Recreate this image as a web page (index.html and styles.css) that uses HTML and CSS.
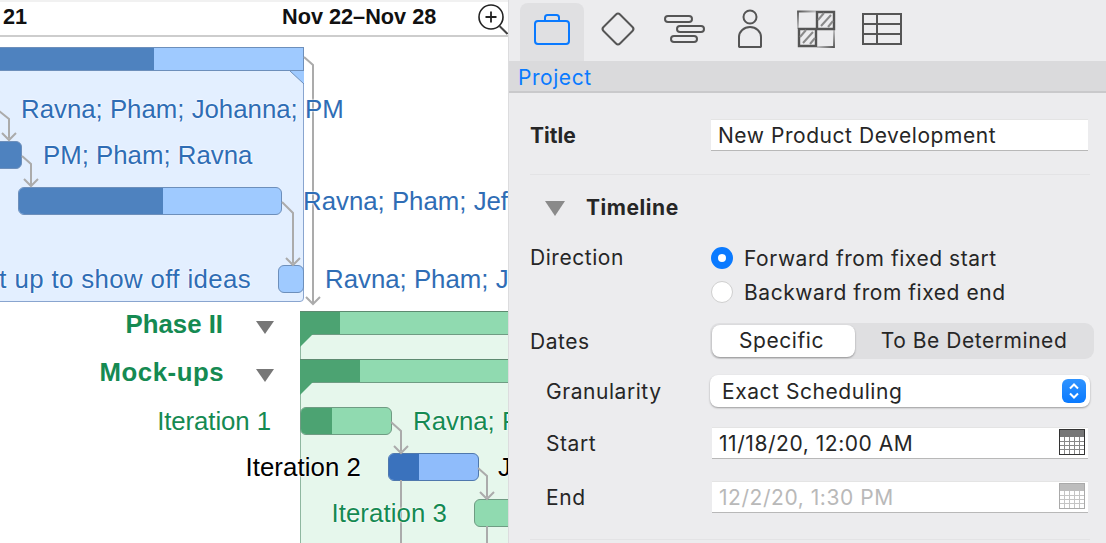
FILE: index.html
```html
<!DOCTYPE html>
<html lang="en">
<head>
<meta charset="utf-8">
<title>New Product Development</title>
<link rel="stylesheet" href="styles.css">
</head>
<body>
<div class="app">
  <section class="gantt">
    <header class="gantt-head">
      <span class="week week-a">21</span>
      <span class="week week-b">Nov 22–Nov 28</span>
      <svg class="zoom-icon" width="30" height="34" viewBox="0 0 30 34"><circle cx="13" cy="16" r="12" fill="none" stroke="#222" stroke-width="1.6"/><path d="M7.500 16h11M13 10.500v11" stroke="#222" stroke-width="1.800" fill="none"/><path d="M21.500 25l8 8" stroke="#444" stroke-width="2" fill="none"/></svg>
    </header>
    <div class="canvas">
      <div class="group group-blue"></div>
      <div class="band band-blue"><i class="done done-blue-a"></i></div>
      <svg class="notch notch-blue" width="14" height="13" viewBox="0 0 14 13"><path d="M0 0H14V13Z" fill="#9fcaff"/><path d="M0 0L14 13" stroke="#6d8fbb" fill="none"/></svg>
      <div class="group group-green"></div>
      <div class="band band-green band-g1"><i class="done done-green-a"></i></div>
      <div class="band band-green band-g2"><i class="done done-green-b"></i></div>
      <svg class="notch notch-g1" width="14" height="14" viewBox="0 0 14 14"><path d="M0 0H14L0 14Z" fill="#4ca372"/></svg>
      <svg class="notch notch-g2" width="14" height="14" viewBox="0 0 14 14"><path d="M0 0H14L0 14Z" fill="#4ca372"/></svg>
      <div class="task task-b1"></div>
      <div class="task task-b2"><i class="done done-b2"></i></div>
      <div class="task task-b3"></div>
      <div class="task task-g1"><i class="done done-g1"></i></div>
      <div class="task task-b4"><i class="done done-b4"></i></div>
      <div class="task task-g3"></div>
      <svg class="links" width="508" height="506" viewBox="0 37 508 506">
        <g fill="none" stroke="#ababab" stroke-width="2">
          <path d="M304 57l9 8V303"/><path d="M306 297l7 7 7-7"/>
          <path d="M-1 111l10 8V138"/><path d="M2 133l7 7 7-7"/>
          <path d="M22 156l9 8V185"/><path d="M24 179l7 7 7-7"/>
          <path d="M282 202l11 11V263"/><path d="M286 258l7 7 7-7"/>
          <path d="M391 422l10 9V451"/><path d="M394 446l7 7 7-7"/>
          <path d="M478 468l9 8V497"/><path d="M480 492l7 7 7-7"/>
          <path d="M401 480V543M487 526V543"/>
        </g>
      </svg>
      <span class="lbl blue l1">Ravna; Pham; Johanna; PM</span>
      <span class="lbl blue l2">PM; Pham; Ravna</span>
      <span class="lbl blue l3">Ravna; Pham; Jef</span>
      <span class="lbl blue l4">t up to show off ideas</span>
      <span class="lbl blue l5">Ravna; Pham; J</span>
      <span class="lbl green strong l6">Phase II</span>
      <span class="tri tri1"></span>
      <span class="lbl green strong l7">Mock-ups</span>
      <span class="tri tri2"></span>
      <span class="lbl green l8">Iteration 1</span>
      <span class="lbl green l9">Ravna; P</span>
      <span class="lbl black l10">Iteration 2</span>
      <span class="lbl black l11">J</span>
      <span class="lbl green l12">Iteration 3</span>
    </div>
  </section>

  <aside class="inspector">
    <nav class="tabs">
      <div class="tab tab-on">
        <svg width="64" height="58" viewBox="0 0 64 58" fill="none" stroke="#0a7aff" stroke-width="2"><rect x="15" y="18" width="34" height="23" rx="3"/><path d="M25 18v-3.500a2.500 2.500 0 0 1 2.500-2.500h9a2.500 2.500 0 0 1 2.500 2.500V18"/></svg>
      </div>
      <div class="tab">
        <svg width="64" height="58" viewBox="0 0 64 58" fill="none" stroke="#555" stroke-width="2"><path d="M30 11.500q2-2 4 0l12.500 12.500q2 2 0 4L34 40.500q-2 2-4 0L17.500 28q-2-2 0-4Z"/></svg>
      </div>
      <div class="tab">
        <svg width="64" height="58" viewBox="0 0 64 58" fill="none" stroke="#555" stroke-width="2"><rect x="13" y="13" width="27" height="6" rx="3"/><rect x="25" y="23" width="27" height="6" rx="3"/><rect x="19" y="33" width="26" height="6" rx="3"/></svg>
      </div>
      <div class="tab">
        <svg width="64" height="58" viewBox="0 0 64 58" fill="none" stroke="#555" stroke-width="2"><circle cx="32" cy="14" r="6.500"/><path d="M21 43V34a11 10 0 0 1 22 0v9a0.800 0.800 0 0 1-1 1H22a0.800 0.800 0 0 1-1-1Z"/></svg>
      </div>
      <div class="tab">
        <svg width="64" height="58" viewBox="0 0 64 58" fill="none" stroke="#555" stroke-width="2">
          <defs>
            <linearGradient id="fadeA" x1="0" y1="0" x2="1" y2="1"><stop offset="0" stop-color="#555"/><stop offset="0.700" stop-color="#555" stop-opacity="0"/></linearGradient>
            <linearGradient id="fadeB" x1="1" y1="1" x2="0" y2="0"><stop offset="0" stop-color="#555"/><stop offset="0.700" stop-color="#555" stop-opacity="0"/></linearGradient>
          </defs>
          <path d="M33 9h17v17H33ZM15 26h17v17H15Z" stroke-width="2.400"/>
          <path d="M37 23l10-11M44 24l5-6M34 17l6-7M19 40l10-11M26 41l5-6M16 34l6-7" stroke="#8a8a8a" stroke-width="2"/>
          <path d="M14 26V8.500H32" stroke="url(#fadeA)" stroke-width="1.800"/>
          <path d="M50 26V44H33" stroke="url(#fadeB)" stroke-width="1.800"/>
        </svg>
      </div>
      <div class="tab">
        <svg width="64" height="58" viewBox="0 0 64 58" fill="none" stroke="#555" stroke-width="2"><rect x="13" y="11" width="38" height="30"/><path d="M13 21h38M13 31h38M27 11v30"/></svg>
      </div>
    </nav>
    <div class="section-bar">Project</div>

    <div class="form">
      <div class="row row-title">
        <label class="label label-strong">Title</label>
        <div class="field field-wide">New Product Development</div>
      </div>
      <hr class="rule">
      <div class="disclosure"><span class="tri-panel"></span><strong>Timeline</strong></div>
      <div class="row row-direction">
        <label class="label">Direction</label>
        <div class="radios">
          <div class="radio-line"><span class="radio radio-on"></span>Forward from fixed start</div>
          <div class="radio-line"><span class="radio"></span>Backward from fixed end</div>
        </div>
      </div>
      <div class="row row-dates">
        <label class="label">Dates</label>
        <div class="segmented"><span class="seg seg-on">Specific</span><span class="seg">To Be Determined</span></div>
      </div>
      <div class="row row-gran">
        <label class="label label-sub">Granularity</label>
        <div class="select">Exact Scheduling
          <span class="stepper"><svg width="24" height="24" viewBox="0 0 24 24" fill="none" stroke="#fff" stroke-width="2"><path d="M8 9.500l4-4 4 4M8 14.500l4 4 4-4"/></svg></span>
        </div>
      </div>
      <div class="row row-start">
        <label class="label label-sub">Start</label>
        <div class="field field-date"><span>11/18/20, 12:00 AM</span>
          <svg class="cal" width="26" height="26" viewBox="0 0 26 26"><rect x="0.500" y="0.500" width="25" height="25" fill="#fff" stroke="#333"/><rect x="1" y="1" width="24" height="7" fill="#777"/><path d="M1 12.500h24M1 16.500h24M1 20.500h24M5.500 8v17M10.500 8v17M15.500 8v17M20.500 8v17" stroke="#888" fill="none"/></svg>
        </div>
      </div>
      <div class="row row-end">
        <label class="label label-sub">End</label>
        <div class="field field-date field-off"><span>12/2/20, 1:30 PM</span>
          <svg class="cal" width="26" height="26" viewBox="0 0 26 26"><rect x="0.500" y="0.500" width="25" height="25" fill="#fff" stroke="#aaa"/><rect x="1" y="1" width="24" height="7" fill="#bdbdbd"/><path d="M1 12.500h24M1 16.500h24M1 20.500h24M5.500 8v17M10.500 8v17M15.500 8v17M20.500 8v17" stroke="#c4c4c4" fill="none"/></svg>
        </div>
      </div>
      <hr class="rule rule-end">
    </div>
  </aside>
</div>
</body>
</html>
```
FILE: styles.css
```css
* { box-sizing: border-box; }
html, body { margin: 0; height: 100%; overflow: hidden; background: #fff; }
.app { display: flex; width: 1106px; height: 543px; overflow: hidden; }

/* Gantt chart */
.gantt { position: relative; flex: 0 0 508px; height: 543px; overflow: hidden; background: #fff; font-family: "Liberation Sans", Arial, sans-serif; }
.gantt-head { position: relative; z-index: 3; height: 37px; border-top: 2px solid #f1f1f1; border-bottom: 2px solid #cdcdcd; }
.week { position: absolute; top: 3px; font-weight: 700; font-size: 21.7px; line-height: 24px; color: #111; }
.week-a { left: 3px; }
.week-b { left: 282px; }
.zoom-icon { position: absolute; left: 478px; top: -1px; }
.canvas { position: absolute; left: 0; top: 0; width: 508px; height: 543px; }
.group { position: absolute; }
.group-blue { left: -4px; top: 47px; width: 308px; height: 255px; background: #e3efff; border: 1px solid #89a5cf; border-radius: 0 0 4px 0; }
.group-green { left: 300px; top: 311px; width: 220px; height: 240px; background: #e6f7ec; border-left: 1px solid #8fb7a0; }
.band { position: absolute; height: 24px; overflow: hidden; }
.band-blue { left: -4px; top: 47px; width: 308px; background: #9fcaff; border: 1px solid #6d8fbb; }
.band-green { left: 300px; width: 220px; background: #90dab0; border-top: 1px solid #5d8a70; border-bottom: 1px solid #6f9c83; }
.band-g1 { top: 311px; }
.band-g2 { top: 359px; }
.done { display: block; position: absolute; left: 0; top: 0; bottom: 0; }
.done-blue-a { width: 157px; background: #4e82bf; }
.done-green-a { width: 40px; background: #4ca372; }
.done-green-b { width: 60px; background: #4ca372; }
.notch { position: absolute; }
.notch-blue { left: 290px; top: 71px; }
.notch-g1 { left: 300px; top: 333px; }
.notch-g2 { left: 300px; top: 381px; }
.task { position: absolute; height: 28px; border-radius: 6px; overflow: hidden; background: #9fcaff; border: 1px solid #6d8fbb; }
.task-b1 { left: -6px; top: 141px; width: 28px; background: #4e82bf; }
.task-b2 { left: 18px; top: 187px; width: 264px; }
.task-b3 { left: 278px; top: 265px; width: 26px; }
.task-g1 { left: 300px; top: 407px; width: 92px; background: #90dab0; border-color: #6f9c83; }
.task-b4 { left: 388px; top: 453px; width: 91px; background: #8fbcfb; border-color: #4f78ad; }
.task-g3 { left: 474px; top: 499px; width: 60px; background: #90dab0; border-color: #6f9c83; }
.done-b2 { width: 144px; background: #4e82bf; }
.done-g1 { width: 31px; background: #4ca372; }
.done-b4 { width: 30px; background: #3a72bd; }
.links { position: absolute; left: 0; top: 37px; }
.lbl { position: absolute; font-size: 25.8px; line-height: 30px; white-space: nowrap; text-shadow: 0 0 2px #fff, 0 0 2px #fff; }
.blue { color: #2f6db5; }
.green { color: #158a52; }
.black { color: #000; }
.strong { font-weight: 700; }
.l1 { left: 21px; top: 94px; }
.l2 { left: 43px; top: 140px; }
.l3 { left: 303px; top: 186px; }
.l4 { right: 257px; top: 264px; letter-spacing: .38px; }
.l5 { left: 325px; top: 264px; }
.l6 { right: 285px; top: 309px; }
.l7 { right: 284px; top: 357px; letter-spacing: .5px; }
.l8 { right: 237px; top: 406px; letter-spacing: -.08px; }
.l9 { left: 413px; top: 406px; }
.l10 { right: 147px; top: 452px; letter-spacing: .08px; }
.l11 { left: 498px; top: 452px; }
.l12 { right: 61px; top: 498px; letter-spacing: .08px; }
.tri { position: absolute; left: 256px; width: 0; height: 0; border-left: 9px solid transparent; border-right: 9px solid transparent; border-top: 13px solid #777; }
.tri1 { top: 321px; }
.tri2 { top: 369px; }

/* Inspector */
.inspector { flex: 1 1 auto; height: 543px; background: #ececee; border-left: 1px solid #dcdcde; font-family: Inter, "Liberation Sans", sans-serif; color: #262626; font-size: 21px; letter-spacing: .55px; }
.tabs { display: flex; gap: 2px; height: 61px; padding: 3px 0 0 11px; }
.tab { width: 64px; height: 58px; border-radius: 8px 8px 0 0; }
.tab svg { display: block; }
.tab-on { background: #e0e0e2; }
.section-bar { height: 32px; padding-left: 9px; background: #dadadc; border-bottom: 2px solid #c9c9cb; color: #0a7aff; line-height: 33px; }
.form { padding: 26px 16px 0 21px; }
.row { display: flex; align-items: flex-start; }
.label { flex: 0 0 181px; line-height: 24px; }
.label-strong { font-weight: 700; letter-spacing: 0; }
.label-sub { padding-left: 16px; }
.field { position: relative; height: 32px; line-height: 32px; background: #fff; padding-left: 7px; border-top: 1px solid #e4e4e4; border-bottom: 1px solid #b8b8b8; }
.field-wide { flex: 0 0 377px; }
.field-date { flex: 0 0 376px; margin-left: 1px; }
.field-off { color: #b9b9b9; }
.row-title .label { padding-top: 5px; }
.rule { height: 1px; margin: 23px 0 0 0; border: 0; background: #e3e3e5; width: 560px; }
.disclosure { display: flex; align-items: center; height: 24px; margin-top: 20px; padding-left: 15px; }
.disclosure strong { margin-left: 21px; font-weight: 700; }
.tri-panel { width: 0; height: 0; border-left: 10px solid transparent; border-right: 10px solid transparent; border-top: 15px solid #8a8a8a; margin-top: 3px; }
.row-direction { margin-top: 28px; }
.row-direction .label { margin-top: -1px; }
.radio-line { display: flex; align-items: center; height: 34px; gap: 11px; margin-top: -6px; }
.radio-line + .radio-line { margin-top: 0; }
.radio { flex: 0 0 22px; height: 22px; border-radius: 50%; background: #fff; border: 1px solid #cfcfcf; }
.radio-on { border: 7px solid #0a7aff; }
.row-dates { margin-top: 14px; }
.row-dates .label { padding-top: 7px; }
.segmented { display: flex; width: 384px; height: 36px; padding: 2px; margin-left: -1px; border-radius: 9px; background: #dfdfe1; }
.seg { flex: 1 1 auto; text-align: center; line-height: 32px; padding-left: 1px; }
.seg-on { flex: 0 0 143px; padding: 0 4px 0 0; background: #fff; border-radius: 8px; box-shadow: 0 1px 2px rgba(0,0,0,.35); }
.row-gran { margin-top: 16px; }
.row-gran .label { padding-top: 5px; }
.select { position: relative; width: 380px; height: 32px; margin-left: -1px; padding-left: 12px; line-height: 33px; background: #fff; border-radius: 8px; box-shadow: 0 1px 2px rgba(0,0,0,.35); }
.stepper { position: absolute; right: 4px; top: 4px; width: 24px; height: 24px; border-radius: 6px; background: linear-gradient(#2f93ff, #0a7aff); }
.stepper svg { display: block; }
.row-start { margin-top: 20px; }
.row-start .label { padding-top: 5px; }
.row-end { margin-top: 22px; }
.row-end .label { padding-top: 5px; }
.cal { position: absolute; right: 3px; top: 1px; }
.rule-end { margin-top: 26px; }
```
